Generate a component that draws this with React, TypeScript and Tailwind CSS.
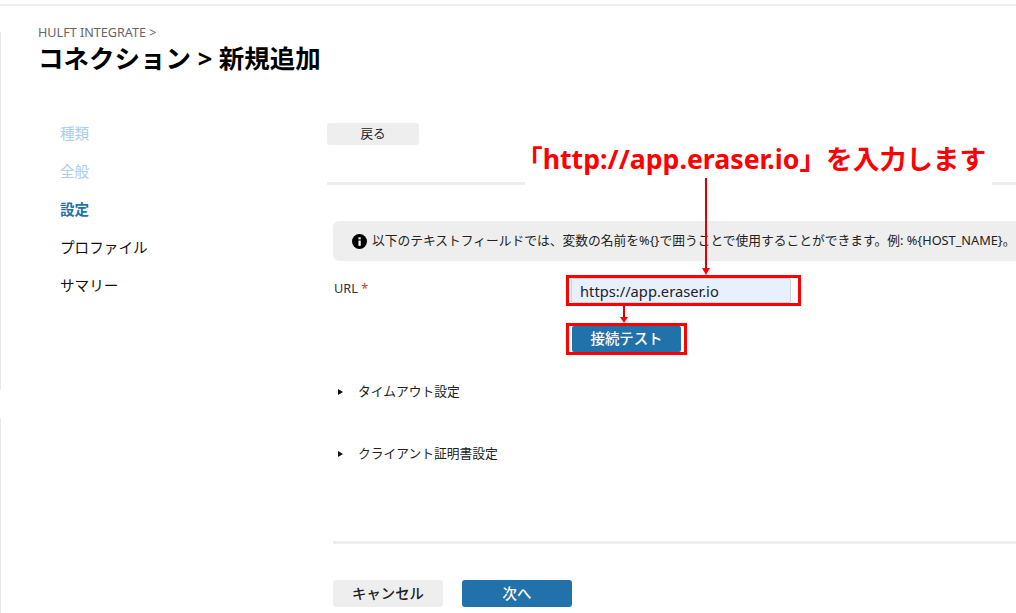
const sans = "font-['Noto_Sans','Noto_Sans_CJK_JP',sans-serif]";

function NavItem({ label, className }: { label: string; className: string }) {
  return <div className={`h-[38.2px] flex items-center text-[14.6px] ${className}`}>{label}</div>;
}

function Disclosure({ label, className }: { label: string; className: string }) {
  return (
    <div className={`flex items-center h-5 text-[12.75px] text-[#222] ${className}`}>
      <svg width="8" height="8" viewBox="0 0 8 8" className="ml-[3px] mr-[14px]">
        <path d="M2 1 L7 4 L2 7 Z" fill="#111" />
      </svg>
      {label}
    </div>
  );
}

export default function App() {
  return (
    <div className={`relative w-[1016px] h-[613px] overflow-hidden bg-white ${sans}`}>
      <div className="h-[6px] border-b-2 border-[#eeeeee]" />
      <div className="pl-[38px] pt-[19px]">
        <div className="text-[12.6px] leading-[16px] text-[#666]">HULFT INTEGRATE &gt;</div>
        <h1 className="text-[25.5px] leading-[34px] font-bold text-black">コネクション &gt; 新規追加</h1>
      </div>
      <div className="flex mt-[38px]">
        <nav className="w-[327px] shrink-0 pl-[60px] pt-[2px]">
          <NavItem label="種類" className="text-[#a9cdec]" />
          <NavItem label="全般" className="text-[#a9cdec]" />
          <NavItem label="設定" className="text-[#2171aa] font-bold -mt-px" />
          <NavItem label="プロファイル" className="text-[#111]" />
          <NavItem label="サマリー" className="text-[#111]" />
        </nav>
        <main className="flex-1 min-w-0 pt-[10px]">
          <button className="w-[92px] h-[22px] rounded-[3px] bg-[#eeeeee] text-[12.6px] text-[#222] flex items-center justify-center">戻る</button>
          <div className="mt-[37px] h-[3px] bg-[#eeeeee]" />
          <div className="pl-[6px]">
            <div className="mt-[36px] w-[720px] h-[40px] rounded-l-[6px] bg-[#eeeeee] flex items-center pl-[19px] text-[12.75px] text-[#222] whitespace-nowrap">
              <svg width="15" height="15" viewBox="0 0 16 16" className="mr-[5px] shrink-0">
                <circle cx="8" cy="8" r="8" fill="#000" />
                <rect x="6.9" y="7" width="2.4" height="5.6" fill="#fff" />
                <rect x="6.9" y="3.5" width="2.4" height="2.2" fill="#fff" />
              </svg>
              以下のテキストフィールドでは、変数の名前を%{"{}"}で囲うことで使用することができます。例: %{"{HOST_NAME}"}。
            </div>
            <div className="flex mt-[14px]">
              <div className="w-[233px] pl-[1px] pt-[4px] text-[12.75px] leading-[18px] text-[#333]">
                URL <span className="text-[#c0392b]">*</span>
              </div>
              <div className="border-[3px] border-[#ff0000] w-[235px] h-[31px] pl-[2px]">
                <input
                  readOnly
                  value="https://app.eraser.io"
                  className="w-[220px] h-[25px] border border-[#ccd4e0] bg-[#e8f0fe] rounded-[2px] px-2 text-[14.7px] text-[#222] outline-none"
                />
              </div>
            </div>
            <div className="ml-[233px] mt-[17px] w-[121px] h-[32px] border-[3px] border-[#ff0000] pl-[3px]">
              <button className="w-[109px] h-[26px] rounded-[2px] bg-[#2171aa] text-white text-[14.4px] font-medium flex items-center justify-center">接続テスト</button>
            </div>
            <Disclosure label="タイムアウト設定" className="mt-[27px]" />
            <Disclosure label="クライアント証明書設定" className="mt-[42px]" />
            <div className="mt-[77px] h-[3px] bg-[#eeeeee]" />
            <div className="flex gap-[19px] mt-[36px]">
              <button className="w-[110px] h-[27px] rounded-[3px] bg-[#eeeeee] text-[14.4px] font-medium text-[#222] flex items-center justify-center">キャンセル</button>
              <button className="w-[110px] h-[27px] rounded-[3px] bg-[#2171aa] text-[14.4px] font-medium text-white flex items-center justify-center">次へ</button>
            </div>
          </div>
        </main>
      </div>

      {/* faint edge of the window behind */}
      <div className="absolute left-0 top-[32px] w-px h-[358px] bg-[#e8e8e8]" />
      <div className="absolute left-0 top-[418px] w-px h-[195px] bg-[#e8e8e8]" />

      {/* annotation callout laid over the form */}
      <div className="absolute left-[525px] top-[140px] w-[467px] h-[45px] bg-white">
        <div className="-ml-[9px] text-[26.7px] leading-[38px] font-bold text-[#ff0000] whitespace-nowrap">「http://app.eraser.io」を入力します</div>
      </div>
      <svg className="absolute left-[700px] top-[176px]" width="12" height="100" viewBox="0 0 12 100">
        <path d="M6 2 V94" stroke="#e00000" strokeWidth="2" />
        <path d="M2 92 L10 92 L6 99 Z" fill="#ff0000" />
      </svg>
      <svg className="absolute left-[618px] top-[306px]" width="12" height="18" viewBox="0 0 12 18">
        <path d="M6 0 V12" stroke="#e00000" strokeWidth="2" />
        <path d="M2 11 L10 11 L6 17 Z" fill="#ff0000" />
      </svg>
    </div>
  );
}
